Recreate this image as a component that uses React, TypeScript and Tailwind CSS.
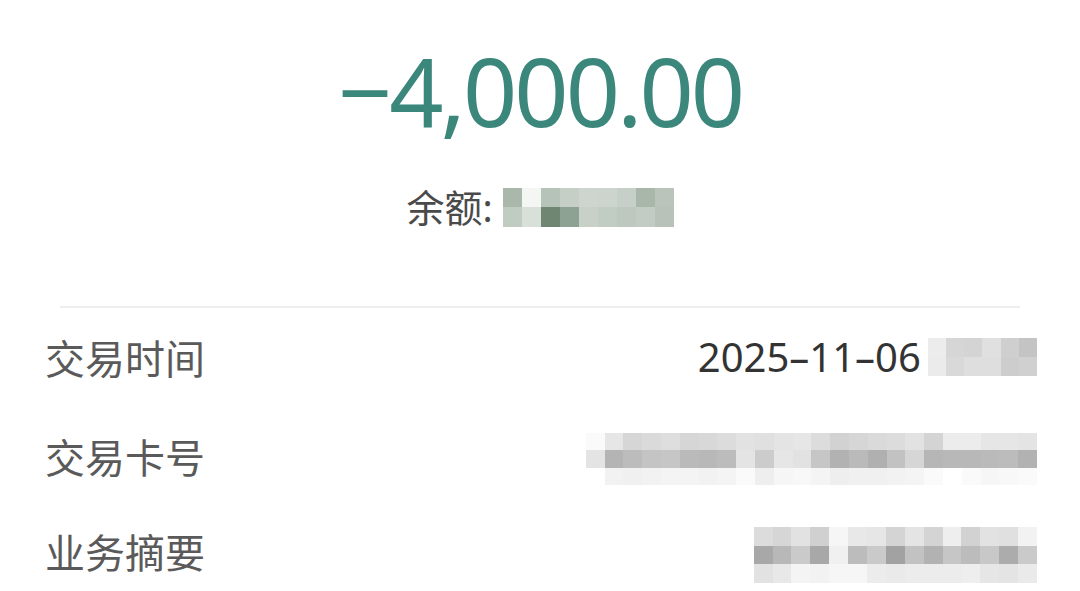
const balanceCells = [
  ["bg-[#aab8ac]", "bg-[#f4f6f4]", "bg-[#b6c3b8]", "bg-[#c5cfc6]", "bg-[#cdd5ce]", "bg-[#ccd4cd]", "bg-[#c7d0c8]", "bg-[#a9b7ab]", "bg-[#bac4bb]"],
  ["bg-[#c0ccc2]", "bg-[#d8e0d9]", "bg-[#6f8672]", "bg-[#8da293]", "bg-[#c8d0c8]", "bg-[#c1ccc3]", "bg-[#bdc8be]", "bg-[#c3ccc4]", "bg-[#b8c2b9]"],
];

const timeCells = [
  ["bg-[#ececec]", "bg-[#d6d6d6]", "bg-[#d4d4d4]", "bg-[#e0e0e0]", "bg-[#cfcfcf]", "bg-[#c4c4c4]"],
  ["bg-[#ebebeb]", "bg-[#d9d9d9]", "bg-[#dedede]", "bg-[#dedede]", "bg-[#cdcdcd]", "bg-[#d0d0d0]"],
];

const cardCells = [
  ["bg-[#fafafa]", "bg-[#e6e6e6]", "bg-[#d6d6d6]", "bg-[#dadada]", "bg-[#dedede]", "bg-[#d6d6d6]", "bg-[#d8d8d8]", "bg-[#dcdcdc]", "bg-[#e2e2e2]", "bg-[#e0e0e0]", "bg-[#e4e4e4]", "bg-[#e6e6e6]", "bg-[#dcdcdc]", "bg-[#d2d2d2]", "bg-[#d6d6d6]", "bg-[#dadada]", "bg-[#dcdcdc]", "bg-[#e2e2e2]", "bg-[#d4d4d4]", "bg-[#ececec]", "bg-[#ececec]", "bg-[#e6e6e6]", "bg-[#e6e6e6]", "bg-[#e4e4e4]"],
  ["bg-[#e4e4e4]", "bg-[#b4b4b4]", "bg-[#bcbcbc]", "bg-[#c4c4c4]", "bg-[#c6c6c6]", "bg-[#bababa]", "bg-[#b8b8b8]", "bg-[#bcbcbc]", "bg-[#e4e4e4]", "bg-[#cccccc]", "bg-[#e6e6e6]", "bg-[#e2e2e2]", "bg-[#c6c6c6]", "bg-[#b2b2b2]", "bg-[#bababa]", "bg-[#b0b0b0]", "bg-[#c2c2c2]", "bg-[#d6d6d6]", "bg-[#b6b6b6]", "bg-[#b8b8b8]", "bg-[#b8b8b8]", "bg-[#bababa]", "bg-[#bcbcbc]", "bg-[#b2b2b2]"],
  ["bg-[#ffffff]", "bg-[#f2f2f2]", "bg-[#f0f0f0]", "bg-[#f2f2f2]", "bg-[#f4f4f4]", "bg-[#f4f4f4]", "bg-[#f2f2f2]", "bg-[#f4f4f4]", "bg-[#fafafa]", "bg-[#eeeeee]", "bg-[#f6f6f6]", "bg-[#f8f8f8]", "bg-[#f4f4f4]", "bg-[#eeeeee]", "bg-[#f0f0f0]", "bg-[#f0f0f0]", "bg-[#f2f2f2]", "bg-[#f4f4f4]", "bg-[#fafafa]", "bg-[#ffffff]", "bg-[#fafafa]", "bg-[#f6f6f6]", "bg-[#f8f8f8]", "bg-[#fafafa]"],
];

const summaryCells = [
  ["bg-[#dcdcdc]", "bg-[#d6d6d6]", "bg-[#e2e2e2]", "bg-[#d0d0d0]", "bg-[#f6f6f6]", "bg-[#e8e8e8]", "bg-[#e6e6e6]", "bg-[#d4d4d4]", "bg-[#e4e4e4]", "bg-[#d4d4d4]", "bg-[#eeeeee]", "bg-[#d2d2d2]", "bg-[#e2e2e2]", "bg-[#e0e0e0]", "bg-[#f2f2f2]"],
  ["bg-[#a8a8a8]", "bg-[#b8b8b8]", "bg-[#cacaca]", "bg-[#a8a8a8]", "bg-[#f0f0f0]", "bg-[#bcbcbc]", "bg-[#cacaca]", "bg-[#a2a2a2]", "bg-[#c2c2c2]", "bg-[#b2b2b2]", "bg-[#c6c6c6]", "bg-[#bcbcbc]", "bg-[#c8c8c8]", "bg-[#acacac]", "bg-[#cacaca]"],
  ["bg-[#e2e2e2]", "bg-[#e8e8e8]", "bg-[#f4f4f4]", "bg-[#f2f2f2]", "bg-[#f6f6f6]", "bg-[#f6f6f6]", "bg-[#ececec]", "bg-[#eaeaea]", "bg-[#ececec]", "bg-[#ececec]", "bg-[#ececec]", "bg-[#eeeeee]", "bg-[#e6e6e6]", "bg-[#e4e4e4]", "bg-[#eaeaea]"],
];

// pixelated (redacted) block
function Mosaic({ rows, cell, rowH }: { rows: string[][]; cell: string; rowH: string }) {
  return (
    <div className="flex flex-col">
      {rows.map((row, i) => (
        <div key={i} className="flex">
          {row.map((c, j) => (
            <div key={j} className={`${cell} ${rowH} ${c}`} />
          ))}
        </div>
      ))}
    </div>
  );
}

export default function App() {
  return (
    <div className="w-[1080px] h-[591px] overflow-hidden bg-white font-['Noto_Sans','Noto_Sans_CJK_SC',sans-serif]">
      {/* Amount */}
      <div className="flex flex-col items-center pt-[33px]">
        <div className="text-[95px] leading-[114px] text-[#3b877b] tracking-[-3px]">−4,000.00</div>
        <div className="flex items-center mt-[40px] h-[40px]">
          <span className="text-[38px] text-[#4a4a4a] leading-[40px]">余额:</span>
          <div className="ml-[10px]">
            <Mosaic rows={balanceCells} cell="w-[19px]" rowH="h-[19.5px]" />
          </div>
        </div>
      </div>

      {/* Divider */}
      <div className="mx-[60px] mt-[79px] h-[2px] bg-[#eeeeee]" />

      {/* Detail rows */}
      <div className="pl-[45px] pr-[43px] mt-[25px] flex flex-col text-[40px] leading-[48px] font-['Noto_Sans_CJK_SC',sans-serif]">
        <div className="flex items-center justify-between h-[48px]">
          <span className="text-[#5a5a5a]">交易时间</span>
          <div className="flex items-center">
            <span className="text-[#333333] font-['Noto_Sans',sans-serif] text-[40px]">2025–11–06</span>
            <div className="ml-[7px]">
              <Mosaic rows={timeCells} cell="w-[18.2px]" rowH="h-[19px]" />
            </div>
          </div>
        </div>
        <div className="flex items-center justify-between h-[52px] mt-[49px]">
          <span className="text-[#5a5a5a]">交易卡号</span>
          <div className="mt-[6px]">
            <Mosaic rows={cardCells} cell="w-[18.8px]" rowH="h-[17.5px]" />
          </div>
        </div>
        <div className="flex items-center justify-between h-[56px] mt-[41px]">
          <span className="text-[#5a5a5a]">业务摘要</span>
          <div className="mt-[8px]">
            <Mosaic rows={summaryCells} cell="w-[18.9px]" rowH="h-[18.7px]" />
          </div>
        </div>
      </div>
    </div>
  );
}
